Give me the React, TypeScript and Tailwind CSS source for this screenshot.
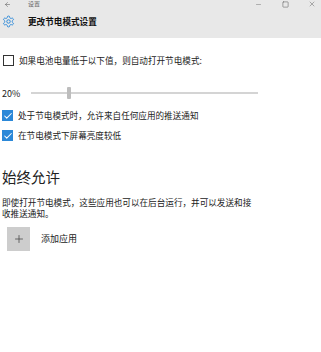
import { ArrowLeft, Check, Minus, Plus, Square, X } from 'lucide-react';

const cjk = { fontFamily: '"Noto Sans CJK SC", "Noto Sans", sans-serif' };

const Gear: React.FC = () => (
  <svg width="13" height="13" viewBox="0 0 24 24" fill="none" stroke="#2b88d8" strokeWidth="1.8" strokeLinejoin="round">
    <path d="M12.22 2h-.44a2 2 0 0 0-2 2v.18a2 2 0 0 1-1 1.73l-.43.25a2 2 0 0 1-2 0l-.15-.08a2 2 0 0 0-2.73.73l-.22.38a2 2 0 0 0 .73 2.73l.15.1a2 2 0 0 1 1 1.72v.51a2 2 0 0 1-1 1.74l-.15.09a2 2 0 0 0-.73 2.73l.22.38a2 2 0 0 0 2.73.73l.15-.08a2 2 0 0 1 2 0l.43.25a2 2 0 0 1 1 1.73V20a2 2 0 0 0 2 2h.44a2 2 0 0 0 2-2v-.18a2 2 0 0 1 1-1.73l.43-.25a2 2 0 0 1 2 0l.15.08a2 2 0 0 0 2.73-.73l.22-.39a2 2 0 0 0-.73-2.73l-.15-.08a2 2 0 0 1-1-1.74v-.5a2 2 0 0 1 1-1.74l.15-.09a2 2 0 0 0 .73-2.73l-.22-.38a2 2 0 0 0-2.73-.73l-.15.08a2 2 0 0 1-2 0l-.43-.25a2 2 0 0 1-1-1.73V4a2 2 0 0 0-2-2z" />
    <circle cx="12" cy="12" r="3.2" />
  </svg>
);

const CheckRow: React.FC<{ checked?: boolean; label: string }> = ({ checked, label }) => (
  <div className="flex items-center gap-[5px]">
    {checked ? (
      <div className="flex items-center justify-center size-[11px] bg-[#2b88d8]">
        <Check className="size-[10px] text-white" strokeWidth={2.5} />
      </div>
    ) : (
      <div className="size-[11px] border border-[#333]" />
    )}
    <span className="text-[8.6px] leading-none text-[#222]">{label}</span>
  </div>
);

const App: React.FC = () => {
  return (
    <div className="w-[321px] h-[352px] bg-white overflow-hidden" style={cjk}>
      <div className="flex flex-col h-[38px] bg-[#e8e8e8]">
        <div className="flex items-center h-[8px] text-[#666]">
          <ArrowLeft className="ml-[4px] size-[7px]" strokeWidth={2} />
          <span className="ml-[17px] text-[6px] leading-none">设置</span>
          <Minus className="ml-auto size-[7px]" strokeWidth={1.5} />
          <Square className="ml-[20px] size-[7px]" strokeWidth={2} />
          <X className="ml-[19px] mr-[5px] size-[8px]" strokeWidth={1.5} />
        </div>
        <div className="flex items-center h-[30px] pb-[4px]">
          <div className="ml-[2px]">
            <Gear />
          </div>
          <span className="ml-[13px] text-[8.6px] font-bold leading-none text-[#111]">更改节电模式设置</span>
        </div>
      </div>

      <div className="flex flex-col px-[2px]">
        <div className="mt-[17px] ml-[1px]">
          <CheckRow label="如果电池电量低于以下值，则自动打开节电模式:" />
        </div>

        <div className="flex items-center mt-[21px] h-[12px]">
          <span className="text-[9px] leading-none text-[#222]">20%</span>
          <div className="relative ml-[11px] w-[227px] h-[2px] bg-[#d4d4d4]">
            <div className="absolute left-[36px] top-[-5px] w-[4px] h-[12px] rounded-[1px] bg-[#bdbdbd]" />
          </div>
        </div>

        <div className="flex flex-col gap-[9px] mt-[11px]">
          <CheckRow checked label="处于节电模式时，允许来自任何应用的推送通知" />
          <CheckRow checked label="在节电模式下屏幕亮度较低" />
        </div>

        <h2 className="mt-[29px] text-[14.5px] leading-none text-[#222]">始终允许</h2>

        <p className="mt-[12px] w-[252px] text-[8.6px] leading-[11px] text-[#222]">
          即使打开节电模式，这些应用也可以在后台运行，并可以发送和接收推送通知。
        </p>

        <div className="flex items-center mt-[8px] ml-[5px]">
          <div className="flex items-center justify-center w-[23px] h-[24px] bg-[#cdcdcd]">
            <Plus className="size-[12px] text-[#444]" strokeWidth={1.5} />
          </div>
          <span className="ml-[11px] text-[9px] leading-none text-[#222]">添加应用</span>
        </div>
      </div>
    </div>
  );
};

export default App;
